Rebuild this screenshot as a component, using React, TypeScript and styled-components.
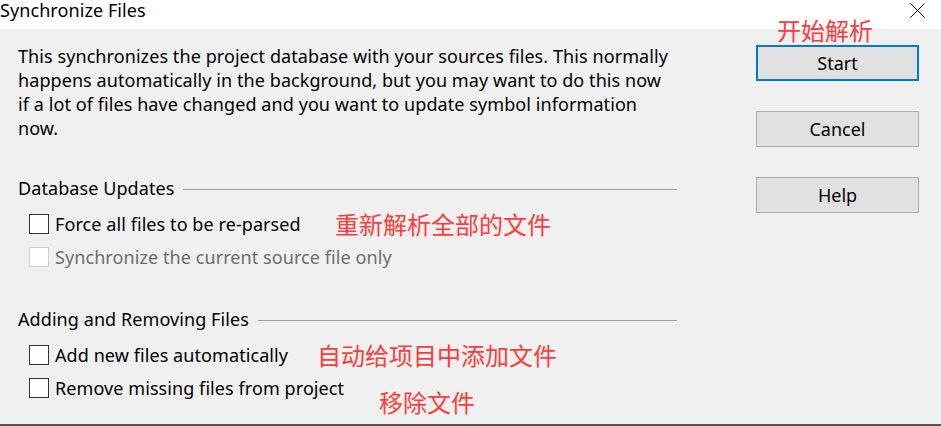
import { FC } from "react";
import styled, { createGlobalStyle } from "styled-components";

const UI_FONT = `"Noto Sans", "Open Sans", sans-serif`;
const CJK_FONT = `"Noto Sans CJK SC", "Noto Sans", sans-serif`;

const GlobalStyle = createGlobalStyle`
  html, body {
    margin: 0;
    padding: 0;
    background: #f0f0f0;
  }
  body {
    font-family: ${UI_FONT};
    letter-spacing: 0.08px;
  }
`;

/** Description text, one entry per rendered line */
const DESCRIPTION = [
  "This synchronizes the project database with your sources files. This normally",
  "happens automatically in the background, but you may want to do this now",
  "if a lot of files have changed and you want to update symbol information",
  "now.",
];

interface OptionProps {
  label: string;
  disabled?: boolean;
}

interface GroupProps {
  title: string;
  options: OptionProps[];
}

const GROUPS: GroupProps[] = [
  {
    title: "Database Updates",
    options: [
      { label: "Force all files to be re-parsed" },
      { label: "Synchronize the current source file only", disabled: true },
    ],
  },
  {
    title: "Adding and Removing Files",
    options: [
      { label: "Add new files automatically" },
      { label: "Remove missing files from project" },
    ],
  },
];

/** Red notes written over the screenshot */
const NOTES = [
  { text: "开始解析", x: 777, y: 16 },
  { text: "重新解析全部的文件", x: 335, y: 210 },
  { text: "自动给项目中添加文件", x: 317, y: 341 },
  { text: "移除文件", x: 379, y: 388 },
];

const App = () => (
  <>
    <GlobalStyle />
    <Dialog>
      <TitleBar>
        <Title>Synchronize Files</Title>
        <CloseButton aria-label="Close">
          <svg width="15" height="15" viewBox="0 0 15 15">
            <path d="M0.5 0.5 L14.5 14.5 M14.5 0.5 L0.5 14.5" stroke="#000" strokeWidth="1" fill="none" />
          </svg>
        </CloseButton>
      </TitleBar>
      <Body>
        <Main>
          <Description>
            {DESCRIPTION.map((line) => (
              <DescriptionLine key={line}>{line}</DescriptionLine>
            ))}
          </Description>
          {GROUPS.map((group) => (
            <Group key={group.title} {...group} />
          ))}
        </Main>
        <Side>
          <Button $default>Start</Button>
          <Button>Cancel</Button>
          <Button>Help</Button>
        </Side>
      </Body>
      {NOTES.map((note) => (
        <Note key={note.text} $x={note.x} $y={note.y}>
          {note.text}
        </Note>
      ))}
    </Dialog>
  </>
);

const Group: FC<GroupProps> = ({ title, options }) => (
  <GroupWrapper>
    <GroupHeading>
      <GroupTitle>{title}</GroupTitle>
      <GroupRule />
    </GroupHeading>
    <OptionList>
      {options.map((option) => (
        <Option key={option.label} $disabled={option.disabled}>
          <CheckBox $disabled={option.disabled} />
          <span>{option.label}</span>
        </Option>
      ))}
    </OptionList>
  </GroupWrapper>
);

const Dialog = styled.div`
  position: relative;
  width: 941px;
  height: 426px;
  display: flex;
  flex-direction: column;
  background: #f0f0f0;
  border-bottom: 2px solid #555555;
  box-sizing: border-box;
  overflow: hidden;
`;

const TitleBar = styled.div`
  height: 29px;
  flex: none;
  display: flex;
  align-items: flex-start;
  justify-content: space-between;
  background: #ffffff;
`;

const Title = styled.span`
  font-size: 18px;
  color: #000;
  line-height: 20px;
`;

const CloseButton = styled.div`
  width: 15px;
  height: 15px;
  margin-right: 16px;
  margin-top: 3px;
  display: flex;
`;

const Body = styled.div`
  flex: 1;
  display: flex;
  padding-left: 18px;
`;

const Main = styled.div`
  width: 659px;
  padding-top: 15px;
`;

const Description = styled.div`
  font-size: 18px;
  line-height: 24px;
  color: #000;
`;

const DescriptionLine = styled.div`
  white-space: nowrap;
`;

const GroupWrapper = styled.div`
  margin-top: 36px;

  & + & {
    margin-top: 34px;
  }
`;

const GroupHeading = styled.div`
  display: flex;
  align-items: center;
  height: 24px;
`;

const GroupTitle = styled.span`
  font-size: 18px;
  color: #000;
  white-space: nowrap;
`;

const GroupRule = styled.div`
  flex: 1;
  height: 1px;
  background: #a0a0a0;
  margin-left: 9px;
  margin-top: 2px;
`;

const OptionList = styled.div`
  margin-top: 7px;
  padding-left: 11px;
  display: flex;
  flex-direction: column;
`;

const Option = styled.label<{ $disabled?: boolean }>`
  height: 33px;
  display: flex;
  align-items: center;
  gap: 6px;
  font-size: 18px;
  white-space: nowrap;
  color: ${({ $disabled }) => ($disabled ? "#6d6d6d" : "#000")};
`;

const CheckBox = styled.span<{ $disabled?: boolean }>`
  width: 20px;
  height: 20px;
  box-sizing: border-box;
  flex: none;
  background: #ffffff;
  border: 1px solid ${({ $disabled }) => ($disabled ? "#cccccc" : "#333333")};
`;

const Side = styled.div`
  width: 163px;
  margin-left: 79px;
  padding-top: 16px;
  display: flex;
  flex-direction: column;
  gap: 30px;
`;

const Button = styled.button<{ $default?: boolean }>`
  height: 36px;
  box-sizing: border-box;
  padding: 0;
  background: #e1e1e1;
  border: ${({ $default }) => ($default ? "2px solid #0078d7" : "1px solid #adadad")};
  font-family: ${UI_FONT};
  font-size: 18px;
  color: #000;
`;

const Note = styled.span<{ $x: number; $y: number }>`
  position: absolute;
  left: ${({ $x }) => $x}px;
  top: ${({ $y }) => $y}px;
  font-family: ${CJK_FONT};
  font-size: 24px;
  line-height: 28px;
  color: #ff3b3b;
  white-space: nowrap;
  letter-spacing: 0;
`;

export default App;
